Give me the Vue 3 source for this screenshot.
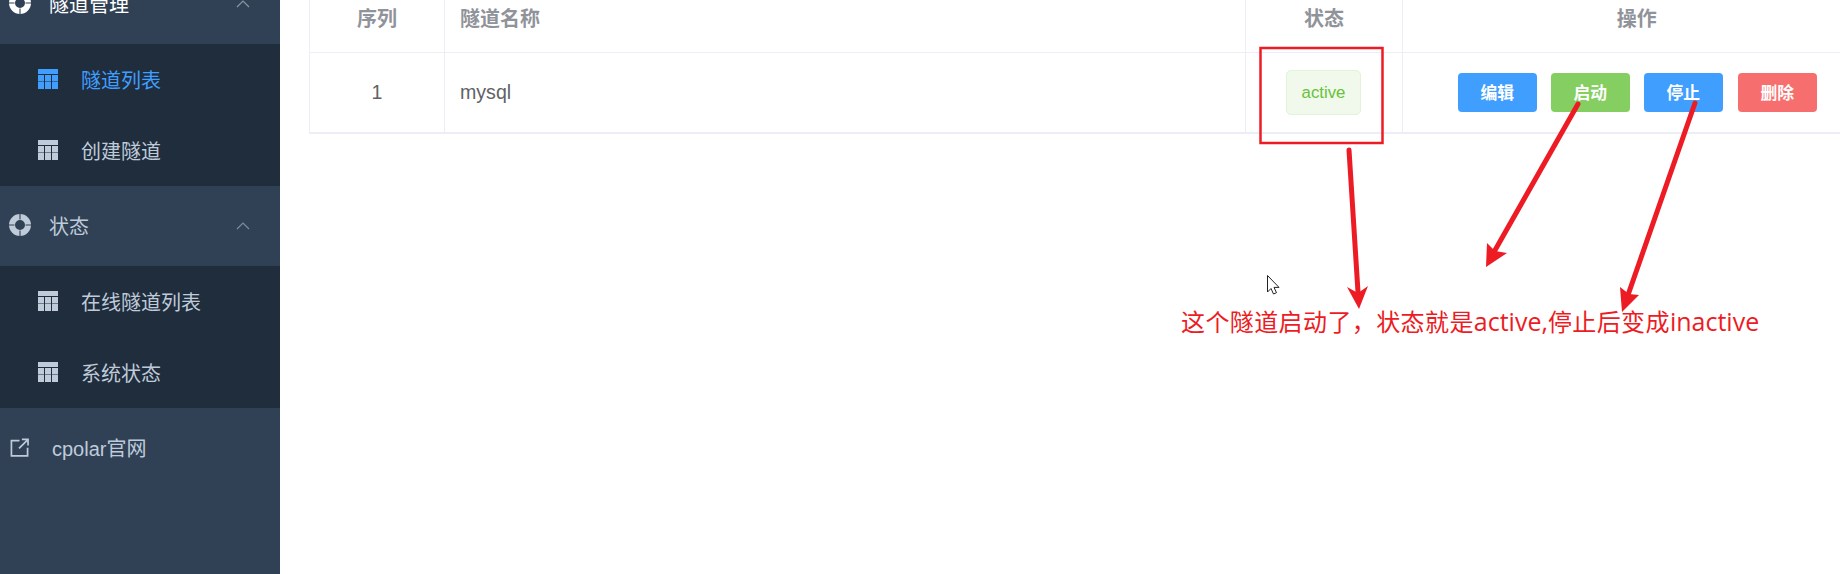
<script setup>
const statusItems = ['在线隧道列表', '系统状态']
const tunnelItems = [
  { label: '隧道列表', active: true },
  { label: '创建隧道', active: false }
]
const buttons = [
  { label: '编辑', type: 'primary' },
  { label: '启动', type: 'success' },
  { label: '停止', type: 'primary' },
  { label: '删除', type: 'danger' }
]
</script>

<template>
  <div class="page">
    <aside class="sidebar">
      <div class="menu-title open">
        <svg class="buoy" viewBox="0 0 22 22"><circle cx="11" cy="11" r="8" fill="none" stroke="currentColor" stroke-width="6" /><path d="M11 0v5.500M11 16.500V22M0 11h5.500M16.500 11H22" stroke="#304156" stroke-width="1.1" /></svg>
        <span>隧道管理</span>
        <svg class="chevron" viewBox="0 0 14 8"><path d="M1 7l6-6 6 6" fill="none" stroke="currentColor" stroke-width="1.2" /></svg>
      </div>
      <div class="submenu">
        <div v-for="item in tunnelItems" :key="item.label" class="sub-item" :class="{ active: item.active }">
          <svg class="grid-icon" viewBox="0 0 20 20"><path d="M0 0h20v20H0z" fill="currentColor" /><path d="M0 5.500h20M6.500 5.500V20M13.500 5.500V20" stroke="#1f2d3d" stroke-width="1" /><path d="M0 12.500h20" stroke="#1f2d3d" stroke-width="1" opacity=".5" /></svg>
          <span>{{ item.label }}</span>
        </div>
      </div>
      <div class="menu-title">
        <svg class="buoy" viewBox="0 0 22 22"><circle cx="11" cy="11" r="8" fill="none" stroke="currentColor" stroke-width="6" /><path d="M11 0v5.500M11 16.500V22M0 11h5.500M16.500 11H22" stroke="#304156" stroke-width="1.1" /></svg>
        <span>状态</span>
        <svg class="chevron" viewBox="0 0 14 8"><path d="M1 7l6-6 6 6" fill="none" stroke="currentColor" stroke-width="1.2" /></svg>
      </div>
      <div class="submenu">
        <div v-for="item in statusItems" :key="item" class="sub-item">
          <svg class="grid-icon" viewBox="0 0 20 20"><path d="M0 0h20v20H0z" fill="currentColor" /><path d="M0 5.500h20M6.500 5.500V20M13.500 5.500V20" stroke="#1f2d3d" stroke-width="1" /><path d="M0 12.500h20" stroke="#1f2d3d" stroke-width="1" opacity=".5" /></svg>
          <span>{{ item }}</span>
        </div>
      </div>
      <div class="menu-title link">
        <svg class="ext" viewBox="0 0 20 20"><path d="M10 2.800H1.500v16h17v-8.500" fill="none" stroke="currentColor" stroke-width="1.8" /><path d="M9.500 11L18 2.500M12.500 1.500h6.500V8" fill="none" stroke="currentColor" stroke-width="1.8" /></svg>
        <span>cpolar官网</span>
      </div>
    </aside>

    <main class="content">
      <table class="tunnels">
        <colgroup>
          <col style="width: 135px" />
          <col style="width: 801px" />
          <col style="width: 157px" />
          <col style="width: 468px" />
        </colgroup>
        <thead>
          <tr>
            <th>序列</th>
            <th class="left">隧道名称</th>
            <th>状态</th>
            <th class="last">操作</th>
          </tr>
        </thead>
        <tbody>
          <tr>
            <td>1</td>
            <td class="left">mysql</td>
            <td><span class="tag">active</span></td>
            <td class="last">
              <div class="actions">
                <button v-for="b in buttons" :key="b.label" class="btn" :class="b.type">{{ b.label }}</button>
              </div>
            </td>
          </tr>
        </tbody>
      </table>
    </main>

    <!-- annotations pasted over the screenshot -->
    <svg class="notes" viewBox="0 0 1840 574">
      <rect x="1260.5" y="48" width="122" height="95" fill="none" stroke="#ed1c24" stroke-width="2.5" />
      <g stroke="#ed1c24" stroke-width="5" stroke-linecap="round" fill="none">
        <path d="M1349 150L1358 292" />
        <path d="M1578 104L1494 252" />
        <path d="M1695 103L1628 295" />
      </g>
      <g fill="#ed1c24">
        <path d="M1359 309L1347 287L1358 293L1368 286Z" />
        <path d="M1486 267L1487 243L1495 251L1507 253Z" />
        <path d="M1622 312L1620 287L1629 294L1639 295Z" />
      </g>
      <path d="M1267.5 275.5V292l3.500-3.500 2.500 5.500 3-1.300-2.500-5.300h5z" fill="#fff" stroke="#222" stroke-width="1" />
    </svg>
    <div class="note-text">这个隧道启动了，状态就是<span class="latin">active,</span>停止后变成<span class="latin">inactive</span></div>
  </div>
</template>

<style scoped>
.page {
  position: relative;
  display: flex;
  width: 1840px;
  height: 574px;
  overflow: hidden;
  background: #fff;
  font-family: "Liberation Sans", "Noto Sans CJK SC", sans-serif;
}

.sidebar {
  width: 280px;
  flex-shrink: 0;
  height: 610px;
  margin-top: -36px;
  background: #304156;
  font-size: 20px;
  color: #bfcbd9;
}

.menu-title {
  position: relative;
  display: flex;
  align-items: center;
  box-sizing: border-box;
  height: 80px;
  padding-left: 9px;
  padding-bottom: 2px;
}

.menu-title.open {
  color: #fff;
}

.menu-title.open .chevron {
  color: #8b96a3;
}

.menu-title.link {
  padding-left: 10px;
}

.buoy {
  width: 22px;
  height: 22px;
  margin-right: 18px;
}

.ext {
  width: 19px;
  height: 19px;
  margin-right: 23px;
}

.chevron {
  position: absolute;
  left: 236px;
  top: 36px;
  width: 14px;
  height: 8px;
  color: #7f8b99;
}

.submenu {
  background: #1f2d3d;
}

.sub-item {
  display: flex;
  align-items: center;
  box-sizing: border-box;
  height: 71px;
  padding-left: 38px;
  padding-bottom: 1px;
}

.sub-item.active {
  color: #409eff;
}

.grid-icon {
  width: 20px;
  height: 20px;
  margin-right: 23px;
}

.content {
  flex: 1;
  min-width: 0;
  padding-left: 29px;
}

.tunnels {
  width: 1561px;
  table-layout: fixed;
  border-collapse: collapse;
  margin-top: -17px;
  border-left: 1px solid #ebeef5;
  border-bottom: 2px solid #ebeef5;
  font-size: 19.6px;
  color: #606266;
}

th {
  height: 69px;
  padding: 0;
  font-size: 20px;
  font-weight: 700;
  color: #909399;
  border-right: 1px solid #ebeef5;
  border-bottom: 1px solid #ebeef5;
}

td {
  height: 79px;
  padding: 0;
  text-align: center;
  border-right: 1px solid #ebeef5;
}

.left {
  padding-left: 15px;
  text-align: left;
}

.last {
  border-right: none;
}

.tag {
  display: inline-block;
  box-sizing: border-box;
  width: 75px;
  height: 45px;
  line-height: 43px;
  margin-left: -1px;
  font-size: 16.8px;
  color: #67c23a;
  background: #f0f9eb;
  border: 1px solid #e1f3d8;
  border-radius: 5px;
}

.actions {
  display: flex;
  justify-content: center;
  gap: 14px;
  margin-top: -1px;
  padding-left: 1px;
}

.btn {
  width: 79px;
  height: 39px;
  padding: 0;
  border: none;
  border-radius: 4px;
  font-family: inherit;
  font-size: 16.8px;
  font-weight: 700;
  color: #fff;
}

.primary {
  background: #409eff;
}

.success {
  background: #85ce61;
}

.danger {
  margin-left: 1px;
  background: #f76e6e;
}

.notes {
  position: absolute;
  left: 0;
  top: 0;
  width: 1840px;
  height: 574px;
  pointer-events: none;
}

.note-text {
  position: absolute;
  left: 1181px;
  top: 305px;
  font-family: "Open Sans", "Noto Sans CJK SC", sans-serif;
  font-size: 24px;
  letter-spacing: 0.4px;
  line-height: 34px;
  white-space: nowrap;
  color: #ed1c24;
}

.latin {
  font-size: 25px;
  letter-spacing: 0;
  line-height: 1;
}
</style>
